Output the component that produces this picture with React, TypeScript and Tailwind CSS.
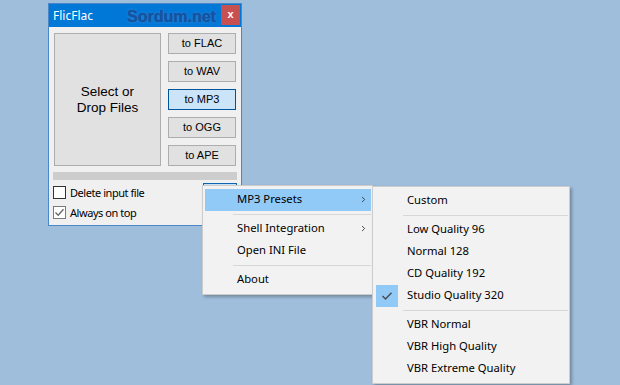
import { ChevronRight } from 'lucide-react';

const ui = "font-['Noto_Sans',sans-serif]";
const classic = "font-['Liberation_Sans',Arial,sans-serif]";

const convertButtons = ['to FLAC', 'to WAV', 'to MP3', 'to OGG', 'to APE'];

type Entry = { label?: string; sep?: boolean; sub?: boolean; active?: boolean; checked?: boolean };

const mainMenu: Entry[] = [
  { label: 'MP3 Presets', sub: true, active: true },
  { sep: true },
  { label: 'Shell Integration', sub: true },
  { label: 'Open INI File' },
  { sep: true },
  { label: 'About' },
];

const presetMenu: Entry[] = [
  { label: 'Custom' },
  { sep: true },
  { label: 'Low Quality 96' },
  { label: 'Normal 128' },
  { label: 'CD Quality 192' },
  { label: 'Studio Quality 320', checked: true },
  { sep: true },
  { label: 'VBR Normal' },
  { label: 'VBR High Quality' },
  { label: 'VBR Extreme Quality' },
];

function CheckBox({ checked, label }: { checked?: boolean; label: string }) {
  return (
    <label className="flex items-center gap-[4px] h-[13px]">
      <span
        className={`w-[13px] h-[13px] bg-white border flex items-center justify-center ${
          checked ? 'border-[#7a7a7a]' : 'border-[#333333]'
        }`}
      >
        {checked && (
          <svg width="11" height="11" viewBox="0 0 11 11">
            <path d="M1.5 5.5 L4.2 8.3 L9.5 2.2" fill="none" stroke="#666" strokeWidth="1.3" />
          </svg>
        )}
      </span>
      <span className={`${ui} text-[11px] tracking-[-0.45px] text-black leading-none`}>{label}</span>
    </label>
  );
}

function Menu({ items, textLeft, className }: { items: Entry[]; textLeft: number; className: string }) {
  return (
    <div
      className={`absolute bg-[#f2f2f2] border border-[#cccccc] py-[3px] pl-[2px] pr-[1px] shadow-[2px_2px_3px_rgba(0,0,0,0.28)] ${className}`}
    >
      {items.map((it, i) =>
        it.sep ? (
          <div key={i} className="h-[7px] flex items-center" style={{ paddingLeft: textLeft - 4 }}>
            <div className="w-full border-t border-[#d7d7d7]" />
          </div>
        ) : (
          <div
            key={i}
            className={`relative h-[22px] pb-[1px] flex items-center ${it.active ? 'bg-[#91c9f7]' : ''}`}
            style={{ paddingLeft: textLeft }}
          >
            {it.checked && (
              <span className="absolute left-[1px] top-0 w-[22px] h-[22px] bg-[#91c9f7] flex items-center justify-center">
                <svg width="12" height="10" viewBox="0 0 12 10">
                  <path d="M1.5 5 L4.5 8 L10.5 1.8" fill="none" stroke="#4a4a4a" strokeWidth="1.4" />
                </svg>
              </span>
            )}
            <span className={`${ui} text-[11.25px] text-black`}>{it.label}</span>
            {it.sub && (
              <ChevronRight className="absolute right-[3px] top-[6px] w-[9px] h-[9px] text-[#333]" strokeWidth={2.4} />
            )}
          </div>
        )
      )}
    </div>
  );
}

export default function App() {
  return (
    <div className="relative w-[620px] h-[385px] bg-[#9fbedb] overflow-hidden">
      {/* FlicFlac window */}
      <div className="absolute left-[48px] top-[3px] w-[194px] h-[223px] border border-[#4b87c6] bg-[#f0f0f0] flex flex-col">
        <div className="relative h-[23px] bg-[#0078d7] flex items-center">
          <span className={`${ui} text-white text-[12px] pl-[4px]`}>FlicFlac</span>
          <span
            className={`absolute left-[78px] top-[1px] ${classic} font-bold text-[16px] text-[#1553a0] [text-shadow:0_0_1px_#1553a0,0_0_3px_#3f8fe2]`}
          >
            Sordum.net
          </span>
          <span className="absolute right-[1px] top-[1px] w-[19px] h-[20px] bg-[#c75050] flex items-center justify-center">
            <span className={`${classic} font-bold text-white text-[11px] leading-none -mt-[2px]`}>x</span>
          </span>
        </div>

        <div className="relative flex-1 pt-[6px] pl-[5px] pr-[4px]">
          <div className="flex gap-[7px]">
            <div className="w-[107px] h-[133px] bg-[#e1e1e1] border border-[#adadad] flex items-center justify-center">
              <p className={`${classic} text-[13.5px] leading-[16px] text-black text-center`}>
                Select or
                <br />
                Drop Files
              </p>
            </div>
            <div className="flex flex-col gap-[7px]">
              {convertButtons.map((b) => (
                <button
                  key={b}
                  className={`w-[68px] h-[21px] border ${classic} text-[11px] text-black flex items-center justify-center ${
                    b === 'to MP3' ? 'bg-[#cce4f7] border-[#005499]' : 'bg-[#e1e1e1] border-[#adadad]'
                  }`}
                >
                  {b}
                </button>
              ))}
            </div>
          </div>

          <div className="mt-[6px] -ml-[1px] w-[184px] h-[8px] bg-[#cdcdcd]" />

          <div className="mt-[6px] -ml-[1px] flex flex-col gap-[7px]">
            <CheckBox label="Delete input file" />
            <CheckBox label="Always on top" checked />
          </div>

          {/* button hidden behind the popup menu */}
          <div className="absolute left-[154px] top-[156px] w-[34px] h-[22px] border border-[#0a64b0] bg-[#cce4f7]" />
        </div>
      </div>

      <Menu items={mainMenu} textLeft={32} className="left-[202px] top-[185px] w-[171px]" />
      <Menu items={presetMenu} textLeft={32} className="left-[372px] top-[186px] w-[198px]" />
    </div>
  );
}
